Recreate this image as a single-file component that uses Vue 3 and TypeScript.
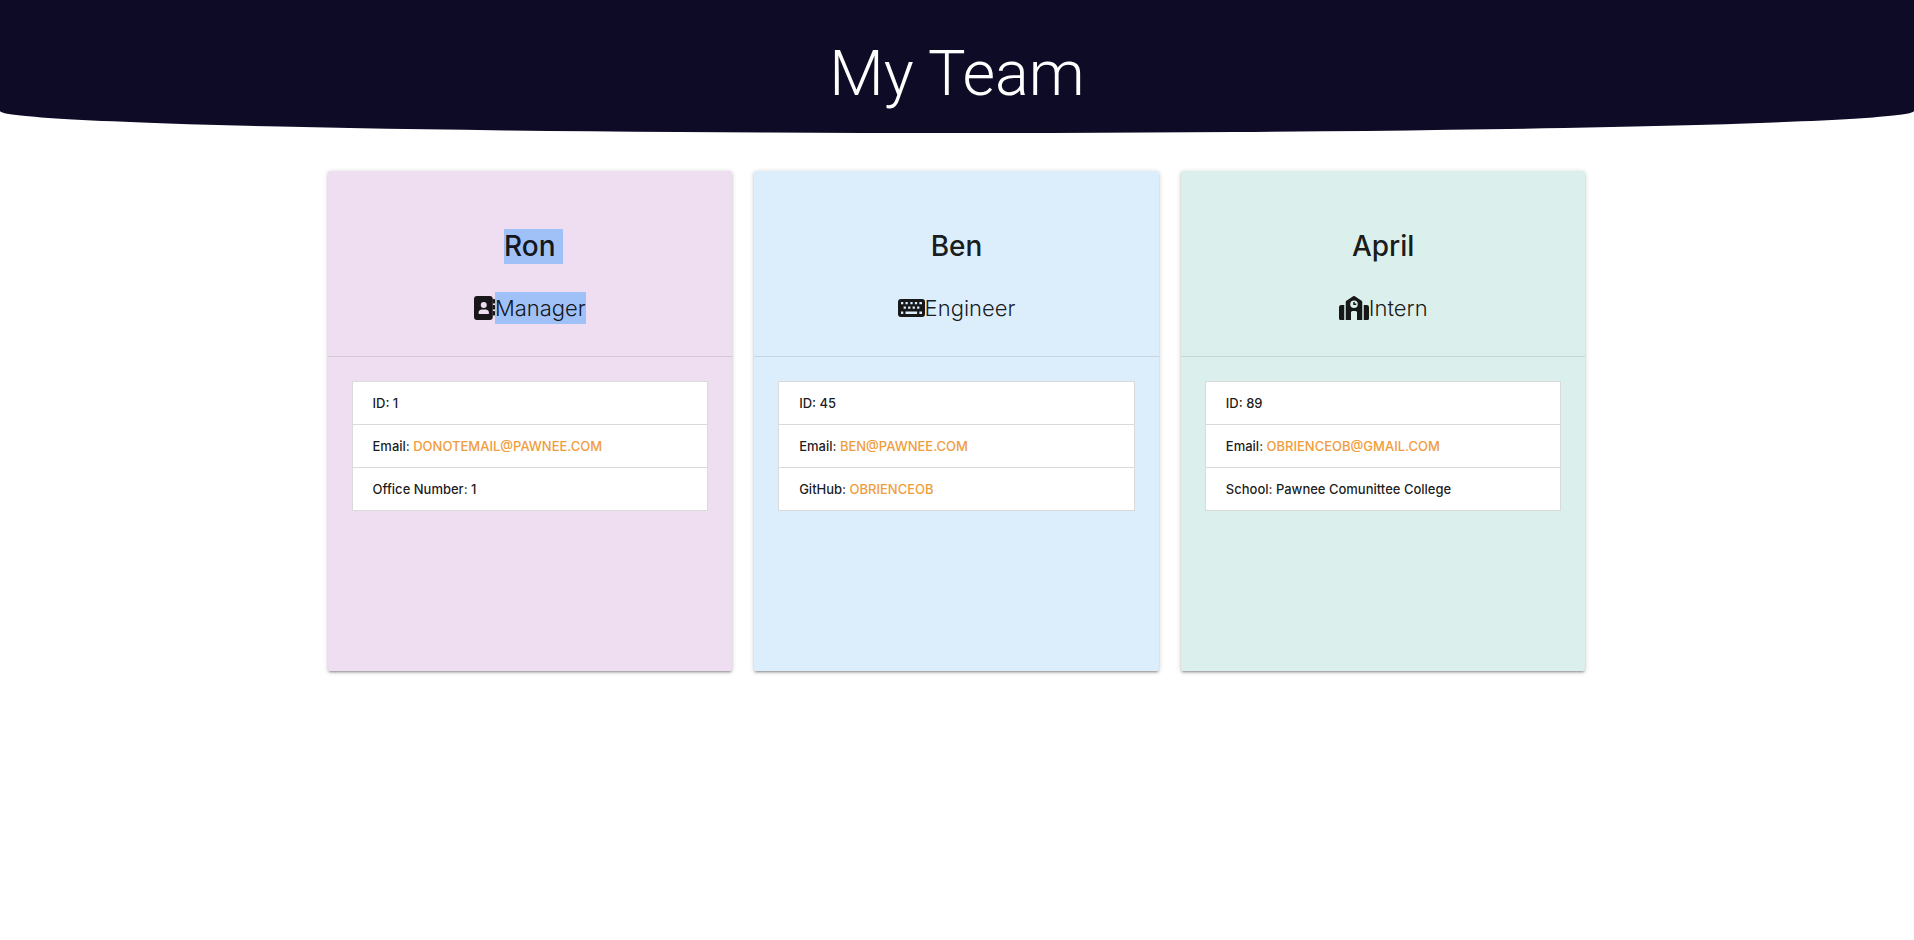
<script setup lang="ts">
interface Field {
  label: string
  value: string
  href?: string
}

interface Member {
  name: string
  role: string
  icon: 'book' | 'keyboard' | 'school'
  tone: string
  selected?: boolean
  fields: Field[]
}

const team: Member[] = [
  {
    name: 'Ron',
    role: 'Manager',
    icon: 'book',
    tone: 'purple',
    selected: true,
    fields: [
      { label: 'ID', value: '1' },
      { label: 'Email', value: 'DONOTEMAIL@PAWNEE.COM', href: 'mailto:donotemail@pawnee.com' },
      { label: 'Office Number', value: '1' },
    ],
  },
  {
    name: 'Ben',
    role: 'Engineer',
    icon: 'keyboard',
    tone: 'blue',
    fields: [
      { label: 'ID', value: '45' },
      { label: 'Email', value: 'BEN@PAWNEE.COM', href: 'mailto:ben@pawnee.com' },
      { label: 'GitHub', value: 'OBRIENCEOB', href: '#obrienceob' },
    ],
  },
  {
    name: 'April',
    role: 'Intern',
    icon: 'school',
    tone: 'teal',
    fields: [
      { label: 'ID', value: '89' },
      { label: 'Email', value: 'OBRIENCEOB@GMAIL.COM', href: 'mailto:obrienceob@gmail.com' },
      { label: 'School', value: 'Pawnee Comunittee College' },
    ],
  },
]
</script>

<template>
  <header class="banner">
    <h1>My Team</h1>
  </header>
  <main class="team">
    <article v-for="m in team" :key="m.name" class="card" :class="m.tone">
      <div class="card-head">
        <h2 class="name"><span :class="{ selected: m.selected }">{{ m.name }}</span></h2>
        <p class="role">
          <svg v-if="m.icon === 'book'" class="icon" viewBox="0 0 448 512" aria-hidden="true">
            <path fill-rule="evenodd" d="M64 0H336a64 64 0 0 1 64 64V448a64 64 0 0 1-64 64H64a64 64 0 0 1-64-64V64A64 64 0 0 1 64 0ZM208 128a64 64 0 1 0 0 128a64 64 0 1 0 0-128ZM176 288a80 80 0 0 0-80 80a16 16 0 0 0 16 16H304a16 16 0 0 0 16-16a80 80 0 0 0-80-80Z" />
            <path d="M400 64h32a16 16 0 0 1 16 16v64a16 16 0 0 1-16 16h-32ZM400 192h32a16 16 0 0 1 16 16v64a16 16 0 0 1-16 16h-32ZM400 320h32a16 16 0 0 1 16 16v64a16 16 0 0 1-16 16h-32Z" />
          </svg>
          <svg v-else-if="m.icon === 'keyboard'" class="icon" viewBox="0 0 576 512" aria-hidden="true">
            <path fill-rule="evenodd" d="M64 64H512a64 64 0 0 1 64 64V384a64 64 0 0 1-64 64H64a64 64 0 0 1-64-64V128A64 64 0 0 1 64 64ZM72 128h40v48h-48v-40a8 8 0 0 1 8-8ZM168 128h40v48h-48v-48ZM264 128h48v48h-48ZM360 128h48v48h-48ZM456 128h48a8 8 0 0 1 8 8v40h-56ZM120 224h48v48h-48ZM216 224h48v48h-48ZM312 224h48v48h-48ZM408 224h48v48h-48ZM64 328h48v56h-40a8 8 0 0 1-8-8ZM160 328h248v56h-248ZM456 328h56v48a8 8 0 0 1-8 8h-48Z" />
          </svg>
          <svg v-else class="icon" viewBox="0 0 640 512" aria-hidden="true">
            <path fill-rule="evenodd" d="M302 5a32 32 0 0 1 36 0L482 101a32 32 0 0 1 14 27V512H384V352a32 32 0 0 0-32-32h-64a32 32 0 0 0-32 32V512H144V128a32 32 0 0 1 14-27ZM320 96a80 80 0 1 0 0 160a80 80 0 1 0 0-160Z" />
            <path d="M48 192h64v320H32a32 32 0 0 1-32-32V240a48 48 0 0 1 48-48ZM528 192h64a48 48 0 0 1 48 48v240a32 32 0 0 1-32 32h-80ZM304 128h32v32h32v32h-64Z" />
          </svg>
          <span :class="{ selected: m.selected }">{{ m.role }}</span>
        </p>
      </div>
      <div class="card-body">
        <ul class="fields">
          <li v-for="f in m.fields" :key="f.label">
            {{ f.label }}: <a v-if="f.href" :href="f.href">{{ f.value }}</a><template v-else>{{ f.value }}</template>
          </li>
        </ul>
      </div>
    </article>
  </main>
</template>

<style>
body {
  margin: 0;
  background: #fff;
}
</style>

<style scoped>
.banner {
  display: flex;
  justify-content: center;
  padding: 39px 0 24px;
  background: #0e0b26;
  border-radius: 0 0 50% 50% / 0 0 22px 22px;
}

h1 {
  margin: 0;
  color: #fff;
  font: 300 63px/70px Roboto, sans-serif;
}

.team {
  display: grid;
  grid-template-columns: repeat(3, 1fr);
  gap: 22px;
  max-width: 1258px;
  margin: 38px auto 0;
  padding: 0 1px 24px 0;
  color: rgba(0, 0, 0, 0.9);
  font-family: Inter, sans-serif;
}

.card {
  min-height: 500px;
  border-radius: 2px;
  box-shadow: 0 2px 2px 0 rgba(0, 0, 0, 0.14), 0 3px 1px -2px rgba(0, 0, 0, 0.12), 0 1px 5px 0 rgba(0, 0, 0, 0.2);
}

.purple { background: #efdef1; }
.blue { background: #dceefc; }
.teal { background: #dbefed; }

.card-head {
  display: flex;
  flex-direction: column;
  align-items: center;
  gap: 28px;
  padding: 58px 24px 32px;
  border-bottom: 1px solid rgba(0, 0, 0, 0.1);
}

.name {
  margin: 0;
  font-size: 28px;
  font-weight: 500;
  line-height: 35px;
}

.role {
  display: flex;
  align-items: center;
  margin: 0;
  font-size: 22px;
  font-weight: 300;
  line-height: 32px;
}

.selected {
  display: block;
  background: #a0c1f7;
}

.name .selected {
  margin-right: -7px;
  padding-right: 7px;
}

.icon {
  height: 24px;
  fill: currentColor;
}

.card-body {
  padding: 24px;
}

.fields {
  margin: 0;
  padding: 0;
  list-style: none;
  background: #fff;
  border: 1px solid #dadada;
}

.fields li {
  padding: 11px 20px;
  font-size: 13px;
  font-weight: 500;
  line-height: 20px;
}

.fields li + li {
  border-top: 1px solid #dadada;
}

a {
  color: #f09d3c;
  text-decoration: none;
}
</style>
